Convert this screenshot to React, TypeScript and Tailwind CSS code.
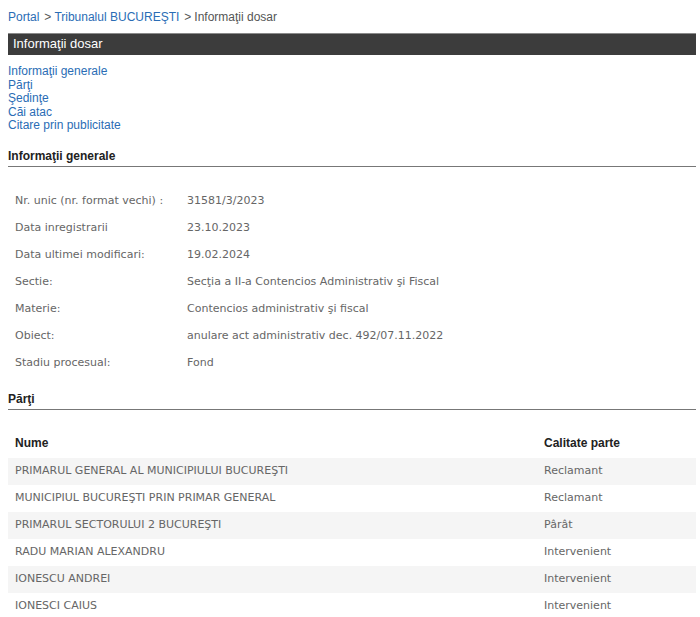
import React from "react";

const info: [string, string][] = [
  ["Nr. unic (nr. format vechi) :", "31581/3/2023"],
  ["Data inregistrarii", "23.10.2023"],
  ["Data ultimei modificari:", "19.02.2024"],
  ["Sectie:", "Secţia a II-a Contencios Administrativ şi Fiscal"],
  ["Materie:", "Contencios administrativ şi fiscal"],
  ["Obiect:", "anulare act administrativ dec. 492/07.11.2022"],
  ["Stadiu procesual:", "Fond"],
];

const parti: [string, string][] = [
  ["PRIMARUL GENERAL AL MUNICIPIULUI BUCUREŞTI", "Reclamant"],
  ["MUNICIPIUL BUCUREŞTI PRIN PRIMAR GENERAL", "Reclamant"],
  ["PRIMARUL SECTORULUI 2 BUCUREŞTI", "Pârât"],
  ["RADU MARIAN ALEXANDRU", "Intervenient"],
  ["IONESCU ANDREI", "Intervenient"],
  ["IONESCI CAIUS", "Intervenient"],
];

const arial = "font-['Liberation_Sans',Arial,sans-serif]";
const tahoma = "font-['DejaVu_Sans',Tahoma,sans-serif]";

export default function App() {
  return (
    <div className={`${arial} bg-white w-[700px] h-[617px] overflow-hidden pl-2 pr-1 pt-[10px]`}>
      <div className="text-[12px] leading-[14px] text-[#555] flex items-center">
        <span className="text-[#2a6db5]">Portal</span>
        <span className="ml-[5px]">&gt;</span>
        <span className="ml-[3px] text-[#2a6db5]">Tribunalul BUCUREŞTI</span>
        <span className="ml-[5px]">&gt;</span>
        <span className="ml-[3px]">Informaţii dosar</span>
      </div>
      <div className="mt-[9px] h-[22px] bg-[#3c3c3c] border-t border-[#8a8a8a] text-white text-[13px] leading-[20px] pl-[5px]">
        Informaţii dosar
      </div>
      <div className="mt-[10px] flex flex-col text-[12px] leading-[13.6px] text-[#2a6db5]">
        <span>Informaţii generale</span>
        <span>Părţi</span>
        <span>Şedinţe</span>
        <span>Căi atac</span>
        <span>Citare prin publicitate</span>
      </div>
      <div className="mt-[16px] border-b border-[#777] pb-[3px] text-[12px] leading-[14px] font-bold text-[#222]">
        Informaţii generale
      </div>
      <div className={`${tahoma} mt-[21px] text-[11px] text-[#666]`}>
        {info.map(([k, v]) => (
          <div key={k} className="flex h-[27px] items-center">
            <div className="w-[179px] pl-[7px]">{k}</div>
            <div>{v}</div>
          </div>
        ))}
      </div>
      <div className="mt-[15px] border-b border-[#777] pb-[3px] text-[12px] leading-[14px] font-bold text-[#222]">
        Părţi
      </div>
      <div className="mt-[18px]">
        <div className="flex h-[30px] items-center text-[12px] font-bold text-[#222]">
          <div className="flex-1 pl-[7px]">Nume</div>
          <div className="w-[152px]">Calitate parte</div>
        </div>
        <div className={`${tahoma} text-[11px] text-[#666]`}>
          {parti.map(([n, c], i) => (
            <div
              key={n}
              className={`flex h-[27px] items-center ${i % 2 === 0 ? "bg-[#f5f5f5]" : "bg-white"}`}
            >
              <div className="flex-1 pl-[7px]">{n}</div>
              <div className="w-[152px]">{c}</div>
            </div>
          ))}
        </div>
      </div>
    </div>
  );
}
